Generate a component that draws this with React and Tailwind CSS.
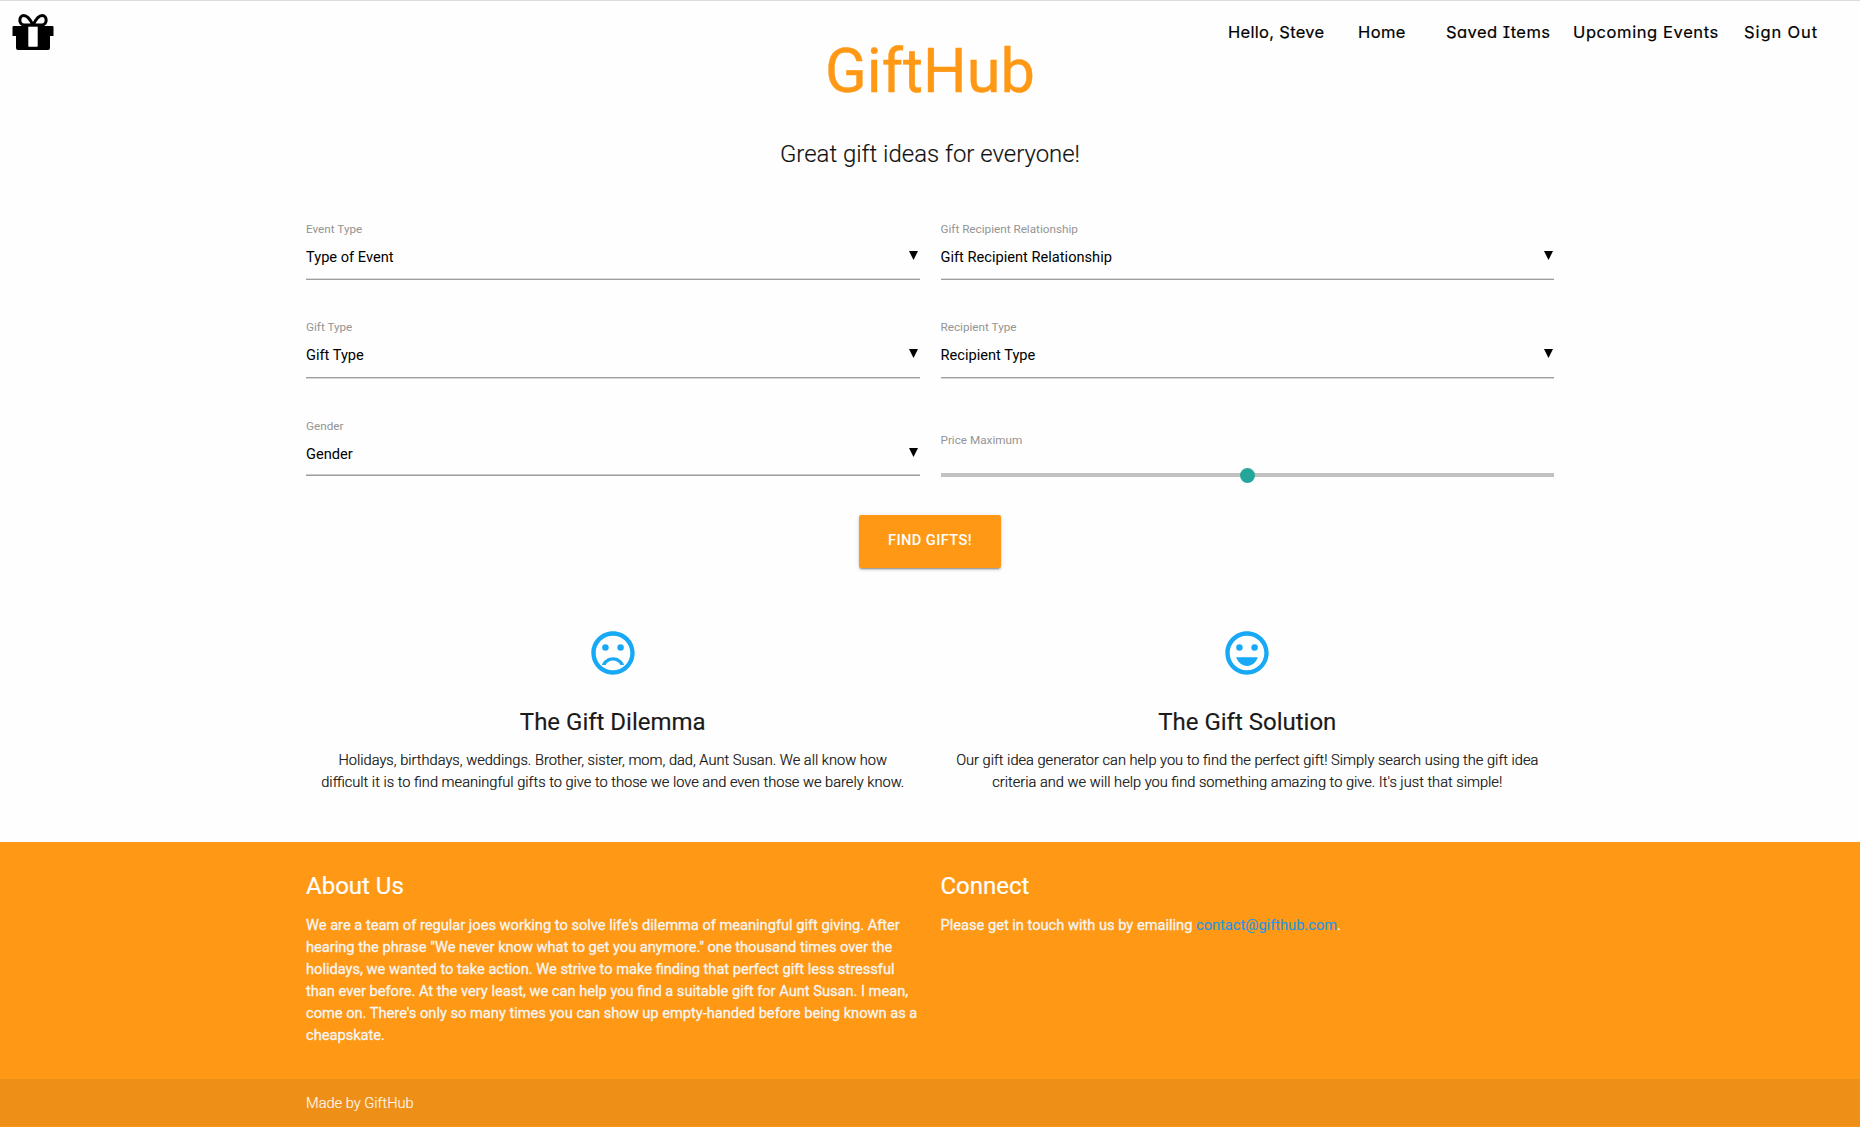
import React from "react";

const navFont =
  "font-['Inter',sans-serif] [font-feature-settings:'cv11','cv08'] font-normal text-[16.5px] leading-[24px] text-black whitespace-nowrap [-webkit-text-stroke:0.2px_#000]";

const fields = [
  { label: "Event Type", value: "Type of Event", size: "h-[34.5px]", line: "border-t-[#dcdcdc] border-b-[#9e9e9e]" },
  { label: "Gift Recipient Relationship", value: "Gift Recipient Relationship", size: "h-[34.5px]", line: "border-t-[#dcdcdc] border-b-[#9e9e9e]" },
  { label: "Gift Type", value: "Gift Type", size: "h-[35.5px]", line: "border-t-[#9e9e9e] border-b-[#d8d8d8]" },
  { label: "Recipient Type", value: "Recipient Type", size: "h-[35.5px]", line: "border-t-[#9e9e9e] border-b-[#d8d8d8]" },
  { label: "Gender", value: "Gender", size: "h-[33.5px]", line: "border-t-[#cccccc] border-b-[#9e9e9e]", cell: "pt-px" },
];

function GiftLogo() {
  return (
    <svg width="42" height="37" viewBox="0 0 42 37" className="block">
      <path
        d="M21 11.2 C18.5 6 15.5 1.6 11.8 1.6 C6.8 1.6 6.2 10.8 12 10.9 L30 10.9 C35.8 10.8 35.2 1.6 30.2 1.6 C26.5 1.6 23.5 6 21 11.2"
        fill="none"
        stroke="#000"
        strokeWidth="3"
      />
      <path d="M1.5 12 H40.5 Q41.5 12 41.5 13 V22 H38 V34 Q38 36 36 36 H6 Q4 36 4 34 V22 H0.5 V13 Q0.5 12 1.5 12 Z" fill="#000" />
      <rect x="16.3" y="12" width="9.4" height="20.7" rx="0.6" fill="#fff" />
      <path d="M15 12.2 H27" stroke="#000" strokeWidth="1" />
    </svg>
  );
}

function Face({ children }) {
  return (
    <svg width="52" height="52" viewBox="0 0 24 24" fill="#18a9f6" className="block">
      <path d="M11.99 2C6.47 2 2 6.48 2 12s4.47 10 9.99 10C17.52 22 22 17.52 22 12S17.52 2 11.99 2zM12 20c-4.42 0-8-3.58-8-8s3.58-8 8-8 8 3.58 8 8-3.58 8-8 8z" />
      <circle cx="15.5" cy="9.5" r="1.5" />
      <circle cx="8.5" cy="9.5" r="1.5" />
      {children}
    </svg>
  );
}

function SelectField({ label, value, size, line, cell = "" }) {
  return (
    <div className={"h-[98px] " + cell}>
      <div className="h-[24.5px] text-[11.73px] leading-[17px] text-[#949494]">{label}</div>
      <div className={"flex flex-col justify-between " + size}>
        <div className="flex items-start justify-between pr-[1.5px]">
          <span className="text-[14.64px] leading-[22px] text-black">{value}</span>
          <svg width="9" height="9" viewBox="0 0 9 9" className="mt-[5.5px]">
            <path d="M0 0H9L4.5 9Z" fill="#000" />
          </svg>
        </div>
        <div className={"h-[2px] shrink-0 border-y " + line} />
      </div>
    </div>
  );
}

function Feature({ icon, title, children }) {
  return (
    <section className="flex flex-col items-center text-center">
      {icon}
      <h5 className="mt-[29.5px] text-[24px] leading-[26.5px] text-[#1a1a1a] [-webkit-text-stroke:0.15px_#1a1a1a]">{title}</h5>
      <p className="mt-[13.5px] whitespace-nowrap text-[14.64px] font-light leading-[22px] text-[#111] [-webkit-text-stroke:0.2px_#111]">
        {children}
      </p>
    </section>
  );
}

export default function App() {
  return (
    <div className="flex h-[1127px] w-[1860px] flex-col overflow-hidden bg-[#fefefe] font-['Roboto',sans-serif]">
      <header className="flex h-[37px] shrink-0 items-start border-t border-[#dcdcdc] pl-[12px]">
        <div className="mt-[13px]">
          <GiftLogo />
        </div>
        <nav className={"mt-[19px] ml-[1174px] flex " + navFont}>
          <a className="w-[130px] tracking-[0.3px]">Hello, Steve</a>
          <a className="w-[88px] tracking-[0.4px]">Home</a>
          <a className="w-[127px] tracking-[0.45px]">Saved Items</a>
          <a className="w-[171px] tracking-[0.6px]">Upcoming Events</a>
          <a className="w-[80px] tracking-[0.9px]">Sign Out</a>
        </nav>
      </header>

      <main className="mx-auto h-[805px] w-[1248px] shrink-0">
        <h1 className="text-center text-[61.3px] leading-[68px] text-[#ff9814] [-webkit-text-stroke:0.4px_#ff9814]">GiftHub</h1>
        <h5 className="mt-[36px] text-center text-[23.95px] font-light leading-[26px] text-[#111] [-webkit-text-stroke:0.15px_#111]">
          Great gift ideas for everyone!
        </h5>

        <form className="mt-[54px] grid grid-cols-2 gap-x-[21px]">
          {fields.map((f) => (
            <SelectField key={f.label} {...f} />
          ))}
          <div className="h-[98px] pt-[15px]">
            <div className="text-[11.73px] leading-[17px] text-[#949494]">Price Maximum</div>
            <div className="mt-[19px] flex h-[15px] items-center justify-center bg-[linear-gradient(#c2c1c2,#c2c1c2)] bg-[length:100%_4px] bg-[position:0_5px] bg-no-repeat">
              <span className="size-[15px] rounded-full bg-[#26a69a]" />
            </div>
          </div>
        </form>

        <div className="flex justify-center">
          <button
            type="button"
            className="h-[53px] w-[142px] rounded-[2px] bg-[#ff9814] pb-[3px] text-[14.67px] font-medium tracking-[0.4px] text-white shadow-[0_2px_2px_0_rgba(0,0,0,0.14),0_1px_5px_0_rgba(0,0,0,0.12),0_3px_1px_-2px_rgba(0,0,0,0.2)]"
          >
            FIND GIFTS!
          </button>
        </div>

        <div className="mt-[59px] grid grid-cols-2 gap-x-[21px]">
          <Feature
            title="The Gift Dilemma"
            icon={
              <Face>
                <path d="M12 14c-2.33 0-4.32 1.45-5.12 3.5h1.67c.69-1.19 1.97-2 3.45-2s2.75.81 3.45 2h1.67c-.8-2.05-2.79-3.5-5.12-3.5z" />
              </Face>
            }
          >
            Holidays, birthdays, weddings. Brother, sister, mom, dad, Aunt Susan. We all know how
            <br />
            difficult it is to find meaningful gifts to give to those we love and even those we barely know.
          </Feature>
          <Feature
            title="The Gift Solution"
            icon={
              <Face>
                <path d="M12 18c2.28 0 4.22-1.66 5-4H7c.78 2.34 2.72 4 5 4z" />
              </Face>
            }
          >
            Our gift idea generator can help you to find the perfect gift! Simply search using the gift idea
            <br />
            criteria and we will help you find something amazing to give. It's just that simple!
          </Feature>
        </div>
      </main>

      <footer className="flex grow flex-col bg-[#ff9814]">
        <div className="mx-auto grid h-[237px] w-[1248px] grid-cols-2 gap-x-[21px] pt-[31px]">
          <section>
            <h5 className="text-[24px] leading-[26px] text-white [-webkit-text-stroke:0.2px_#fff]">About Us</h5>
            <p className="mt-[14.5px] whitespace-nowrap text-[14.64px] leading-[22px] text-[#f8f6f4] [-webkit-text-stroke:0.3px_#f8f6f4]">
              We are a team of regular joes working to solve life's dilemma of meaningful gift giving. After
              <br />
              hearing the phrase "We never know what to get you anymore." one thousand times over the
              <br />
              holidays, we wanted to take action. We strive to make finding that perfect gift less stressful
              <br />
              than ever before. At the very least, we can help you find a suitable gift for Aunt Susan. I mean,
              <br />
              come on. There's only so many times you can show up empty-handed before being known as a
              <br />
              cheapskate.
            </p>
          </section>
          <section>
            <h5 className="text-[24px] leading-[26px] text-white [-webkit-text-stroke:0.2px_#fff]">Connect</h5>
            <p className="mt-[14.5px] text-[14.64px] leading-[22px] text-[#f8f6f4] [-webkit-text-stroke:0.3px_#f8f6f4]">
              Please get in touch with us by emailing{" "}
              <a className="text-[#2196e8] [-webkit-text-stroke:0.1px_#2196e8]">contact@gifthub.com</a>.
            </p>
          </section>
        </div>
        <div className="h-[47px] shrink-0 bg-[#ee8f17]">
          <div className="mx-auto w-[1248px] pt-[13px] text-[14.64px] font-light leading-[22px] text-white/90 [-webkit-text-stroke:0.15px_#fff]">
            Made by GiftHub
          </div>
        </div>
      </footer>
    </div>
  );
}
